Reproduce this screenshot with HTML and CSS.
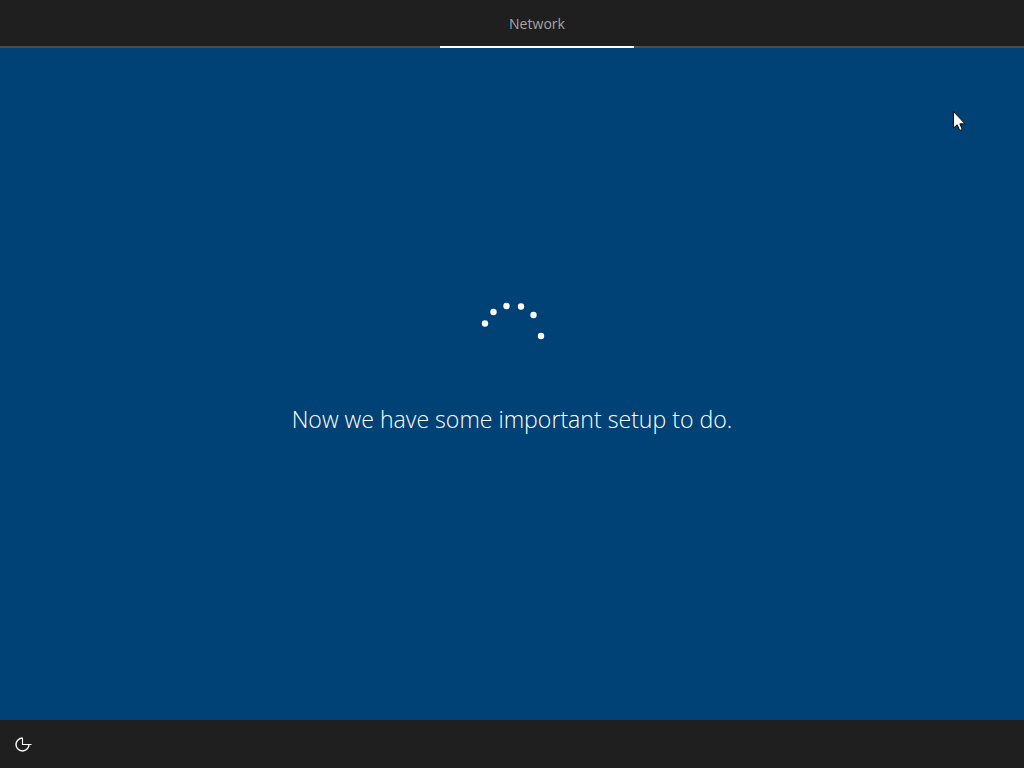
FILE: index.html
```html
<!DOCTYPE html>
<html lang="en">
<head>
<meta charset="utf-8">
<title>Network</title>
<link rel="stylesheet" href="styles.css">
</head>
<body>
<header class="topbar">
  <div class="tab">Network</div>
</header>
<main class="stage">
  <svg class="spinner" width="70" height="42" viewBox="0 0 70 42">
    <circle cx="8" cy="21.500" r="3.200"/>
    <circle cx="16.500" cy="10" r="3.200"/>
    <circle cx="29.500" cy="4" r="3.200"/>
    <circle cx="44" cy="4.500" r="3.200"/>
    <circle cx="56.500" cy="13" r="3.200"/>
    <circle cx="64" cy="34" r="3.200"/>
  </svg>
  <p class="message">Now we have some important setup to do.</p>
  <svg class="cursor" width="16" height="22" viewBox="0 0 16 22">
    <path d="M1.500 1.500V18L5.200 14.800L7.800 20.500L10.300 19.400L7.800 13.800H13Z" fill="#fff" stroke="#0a0a0a" stroke-width="1"/>
  </svg>
</main>
<footer class="bottombar">
  <svg class="access" width="20" height="20" viewBox="0 0 20 20">
    <path class="access-ring" d="M16 10.500A6.500 6.500 0 1 1 9.500 4"/>
    <path class="access-hands" d="M9.500 4V10.500H18.500"/>
  </svg>
</footer>
</body>
</html>
```

FILE: styles.css
```css
* { box-sizing: border-box; }
html, body { height: 100%; }
body {
  margin: 0;
  display: flex;
  flex-direction: column;
  height: 768px;
  overflow: hidden;
  background: #004275;
  font-family: "Open Sans", "Noto Sans", sans-serif;
}
.topbar {
  height: 48px;
  flex: none;
  background: #1f1f1f;
  border-bottom: 2px solid #4d4d4d;
  padding-left: 440px;
}
.tab {
  width: 194px;
  height: 48px;
  border-bottom: 2px solid #fff;
  color: #a6a6a6;
  font-size: 14px;
  letter-spacing: 0.03px;
  line-height: 48px;
  text-align: center;
}
.stage {
  position: relative;
  flex: 1;
  display: flex;
  flex-direction: column;
  align-items: center;
  padding-top: 254px;
}
.spinner { display: block; fill: #fff; }
.message {
  margin: 59px 0 0;
  color: #fff;
  font-size: 23.100px;
  font-weight: 300;
  line-height: 32px;
}
.cursor { position: absolute; left: 952px; top: 62px; }
.bottombar {
  height: 48px;
  flex: none;
  background: #1f1f1f;
  display: flex;
  align-items: center;
  padding-left: 13px;
}
.access { display: block; fill: none; stroke: #fff; }
.access-ring { stroke-width: 1.400; }
.access-hands { stroke-width: 1.100; }
```
